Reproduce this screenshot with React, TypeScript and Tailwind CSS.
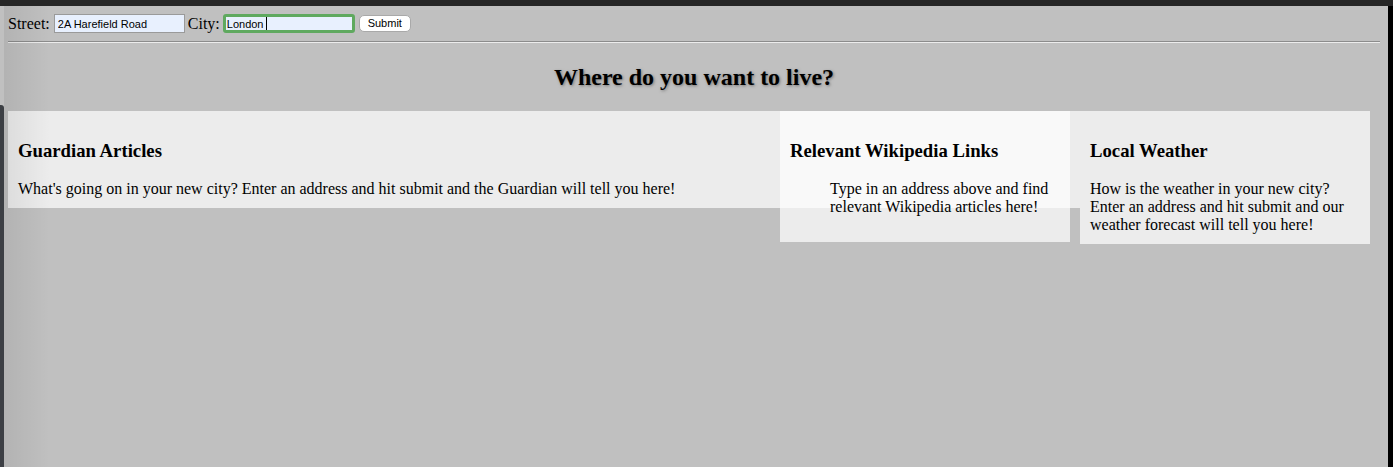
export default function App() {
  return (
    <div className="relative flex h-screen flex-col overflow-hidden bg-[#c0c0c0] font-['Liberation_Serif',serif] text-black">
      {/* window chrome: top bar */}
      <div className="h-[6px] shrink-0 bg-[#262626]" />
      <div className="flex min-h-0 flex-1">
        <main className="flex-1 px-2 pt-2">
          {/* address form */}
          <form className="flex h-[19px] items-center text-[16px] leading-none">
            <span>Street:</span>
            <input
              readOnly
              defaultValue="2A Harefield Road"
              className="ml-[4px] h-[19px] w-[131px] border border-[#9a9a9a] bg-[#e8f0fe] px-[3px] font-['Liberation_Sans',sans-serif] text-[11px] text-black outline-none"
            />
            <span className="ml-[3px]">City:</span>
            <div className="relative ml-[3px]">
              <input
                readOnly
                defaultValue="London"
                className="h-[19px] w-[132px] rounded-[3px] border-[3px] border-[#5fa95f] bg-[#e8f0fe] px-[1px] font-['Liberation_Sans',sans-serif] text-[11px] text-black outline-none"
              />
              <span className="pointer-events-none absolute left-[43px] top-[3px] h-[13px] w-px bg-black" />
            </div>
            <button
              type="button"
              className="ml-[4px] h-[17px] w-[52px] rounded-[5px] border border-[#a9a9a9] bg-white font-['Liberation_Sans',sans-serif] text-[11px] leading-none text-black"
            >
              Submit
            </button>
          </form>

          <hr className="mt-[8px] border-0 border-t border-b border-t-[#8c8c8c] border-b-[#ececec]" />

          <h2 className="mt-[20px] text-center text-[24px] font-bold leading-[28px] [text-shadow:1px_1px_3px_#777]">
            Where do you want to live?
          </h2>

          {/* panels: wiki sits over the right end of the guardian panel */}
          <div className="mt-[20px] grid grid-cols-[772px_290px_10px_290px] items-start">
            <section className="col-start-1 col-end-4 row-start-1 bg-white/70 px-[10px] pb-[10px] pt-[29px]">
              <h3 className="text-[18.72px] font-bold leading-[22px]">Guardian Articles</h3>
              <p className="mt-[18px] text-[16px] leading-[18px]">
                What's going on in your new city? Enter an address and hit submit and the Guardian will tell you here!
              </p>
            </section>

            <section className="relative z-10 col-start-2 row-start-1 bg-white/70 px-[10px] pb-[26px] pt-[29px]">
              <h3 className="text-[18.72px] font-bold leading-[22px]">Relevant Wikipedia Links</h3>
              <ul className="mt-[18px] list-none pl-[40px] text-[16px] leading-[18px]">
                <li>Type in an address above and find relevant Wikipedia articles here!</li>
              </ul>
            </section>

            <section className="col-start-4 row-start-1 bg-white/70 px-[10px] pb-[10px] pt-[29px]">
              <h3 className="text-[18.72px] font-bold leading-[22px]">Local Weather</h3>
              <p className="mt-[18px] text-[16px] leading-[18px]">
                How is the weather in your new city? Enter an address and hit submit and our weather forecast will tell you here!
              </p>
            </section>
          </div>
        </main>
        {/* window chrome: right edge */}
        <div className="w-[5px] shrink-0 bg-black" />
      </div>

      {/* neighbouring window edge and its shadow on the left */}
      <div className="pointer-events-none absolute bottom-0 left-[4px] top-[6px] w-[46px] bg-gradient-to-r from-black/[0.07] to-transparent" />
      <div className="pointer-events-none absolute bottom-0 left-0 top-[105px] w-[4px] rounded-tr-[3px] bg-[#3c3f44]" />
    </div>
  );
}
